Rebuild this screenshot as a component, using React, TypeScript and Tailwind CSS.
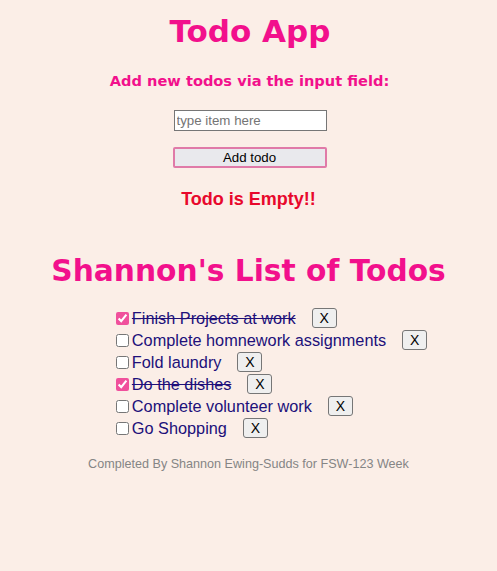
import { useState } from "react";

type Todo = { id: number; text: string; done: boolean };

const INITIAL: Todo[] = [
  { id: 1, text: "Finish Projects at work", done: true },
  { id: 2, text: "Complete homnework assignments", done: false },
  { id: 3, text: "Fold laundry", done: false },
  { id: 4, text: "Do the dishes", done: true },
  { id: 5, text: "Complete volunteer work", done: false },
  { id: 6, text: "Go Shopping", done: false },
];

export default function App() {
  const [todos, setTodos] = useState<Todo[]>(INITIAL);
  const [value, setValue] = useState("");

  const add = () => {
    if (!value.trim()) return;
    setTodos([...todos, { id: Date.now(), text: value, done: false }]);
    setValue("");
  };

  return (
    <div className="min-h-[571px] bg-[#fbeee7] pt-[9px] text-center font-['Liberation_Sans',Arial,sans-serif]">
      <h1 className="ml-[3px] font-['DejaVu_Sans',Verdana,sans-serif] text-[31px] leading-[44px] font-bold text-[#f2108c]">Todo App</h1>
      <h3 className="mt-[17px] ml-[2px] font-['DejaVu_Sans',Verdana,sans-serif] text-[14.6px] leading-[22px] font-bold text-[#f2108c]">
        Add new todos via the input field:
      </h3>
      <div className="mt-[18px] flex flex-col items-center">
        <input
          value={value}
          onChange={(e) => setValue(e.target.value)}
          placeholder="type item here"
          className="ml-[3px] h-[21px] w-[153px] border border-[#767676] bg-white px-[2px] text-[13.3px] placeholder:text-[#757575]"
        />
        <button
          onClick={add}
          className="mt-[16px] ml-[2px] h-[21px] w-[154px] rounded-[2px] border-2 border-[#e07aa8] bg-[#e9e9ed] text-[13.3px] leading-[17px] text-black"
        >
          Add todo
        </button>
      </div>
      <h2 className="mt-[19px] text-[18px] leading-[24px] font-bold text-[#e8082c]">
        {value ? "" : "Todo is Empty!!"}
      </h2>
      <h1 className="mt-[38px] font-['DejaVu_Sans',Verdana,sans-serif] text-[29.7px] leading-[44px] font-bold text-[#f2108c]">
        Shannon's List of Todos
      </h1>
      <ul className="mx-auto mt-[14px] w-fit pl-[42px] text-left">
        {todos.map((t) => (
          <li key={t.id} className="flex h-[22px] items-center text-[16.3px] text-[#20107a]">
            <input
              type="checkbox"
              checked={t.done}
              onChange={() => setTodos(todos.map((x) => (x.id === t.id ? { ...x, done: !x.done } : x)))}
              className="mr-[3px] ml-[4px] h-[13px] w-[13px] accent-[#f0509c]"
            />
            <span className={t.done ? "line-through" : ""}>{t.text}</span>
            <button
              onClick={() => setTodos(todos.filter((x) => x.id !== t.id))}
              className="ml-[16px] h-[20px] w-[25px] rounded-[3px] border border-[#767676] bg-[#efefef] text-[14px] leading-[18px] text-black"
            >
              X
            </button>
          </li>
        ))}
      </ul>
      <p className="mt-[16px] text-[12.6px] text-[#858585]">Completed By Shannon Ewing-Sudds for FSW-123 Week</p>
    </div>
  );
}
